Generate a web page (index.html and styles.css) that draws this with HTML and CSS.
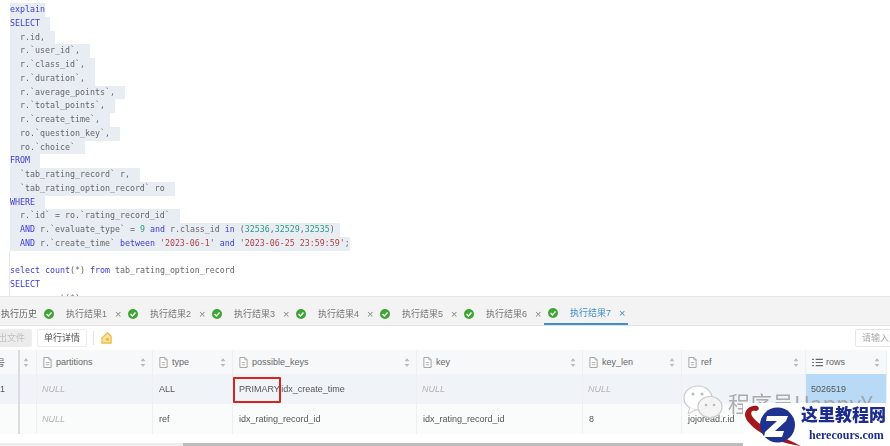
FILE: index.html
```html
<!DOCTYPE html>
<html lang="zh">
<head>
<meta charset="utf-8">
<title>SQL</title>
<link rel="stylesheet" href="styles.css">
</head>
<body>
<svg class="defs" width="0" height="0" aria-hidden="true">
  <symbol id="check" viewBox="0 0 10 10"><circle cx="5" cy="5" r="5" fill="#3fa535"/><path d="M2.600 5.100 4.400 6.900 7.500 3.500" fill="none" stroke="#fff" stroke-width="1.400"/></symbol>
  <symbol id="doc" viewBox="0 0 10 12"><path d="M1 .5h5.500L9 3v8.500H1z" fill="#fff" stroke="#999"/><path d="M6.500.5V3H9M3 6h4M3 8.500h4" fill="none" stroke="#999" stroke-width=".8"/></symbol>
  <symbol id="list" viewBox="0 0 12 10"><path d="M0 1.500h2M4 1.500h8M0 5h2M4 5h8M0 8.500h2M4 8.500h8" stroke="#666" stroke-width="1.300"/></symbol>
  <symbol id="sort" viewBox="0 0 6 12"><path d="M3 1 5.500 4.500H.5zM3 11 .5 7.500h5z" fill="#bbb"/></symbol>
</svg>
<div class="page">
  <section class="code">
    <div class="line sel kw">explain</div>
    <div class="line sel"><span class="kw">SELECT</span>  </div>
    <div class="line sel">  r.id,  </div>
    <div class="line sel">  r.`user_id`,  </div>
    <div class="line sel">  r.`class_id`,  </div>
    <div class="line sel">  r.`duration`,  </div>
    <div class="line sel">  r.`average_points`,  </div>
    <div class="line sel">  r.`total_points`,  </div>
    <div class="line sel">  r.`create_time`,  </div>
    <div class="line sel">  ro.`question_key`,  </div>
    <div class="line sel">  ro.`choice`  </div>
    <div class="line sel"><span class="kw">FROM</span>  </div>
    <div class="line sel">  `tab_rating_record` r,  </div>
    <div class="line sel">  `tab_rating_option_record` ro  </div>
    <div class="line sel"><span class="kw">WHERE</span>  </div>
    <div class="line sel">  r.`id` = ro.`rating_record_id`  </div>
    <div class="line sel">  <span class="kw">AND</span> r.`evaluate_type` = <span class="num">9</span> <span class="kw">and</span> r.class_id <span class="kw">in</span> (<span class="num">32536</span>,<span class="num">32529</span>,<span class="num">32535</span>) </div>
    <div class="line sel">  <span class="kw">AND</span> r.`create_time` <span class="kw">between</span> <span class="str">'2023-06-1'</span> <span class="kw">and</span> <span class="str">'2023-06-25 23:59:59'</span>;</div>
    <div class="line"> </div>
    <div class="line"><span class="kw">select</span> <span class="kw">count</span>(*) <span class="kw">from</span> tab_rating_option_record</div>
    <div class="line"><span class="kw">SELECT</span></div>
    <div class="line">      count(*)</div>
  </section>

  <nav class="tabs">
    <span class="tab-first">执行历史</span>
    <span class="tab"><svg class="check"><use href="#check"/></svg><span class="tab-label">执行结果1</span><span class="close">×</span></span>
    <span class="tab"><svg class="check"><use href="#check"/></svg><span class="tab-label">执行结果2</span><span class="close">×</span></span>
    <span class="tab"><svg class="check"><use href="#check"/></svg><span class="tab-label">执行结果3</span><span class="close">×</span></span>
    <span class="tab"><svg class="check"><use href="#check"/></svg><span class="tab-label">执行结果4</span><span class="close">×</span></span>
    <span class="tab"><svg class="check"><use href="#check"/></svg><span class="tab-label">执行结果5</span><span class="close">×</span></span>
    <span class="tab"><svg class="check"><use href="#check"/></svg><span class="tab-label">执行结果6</span><span class="close">×</span></span>
    <span class="tab active"><svg class="check"><use href="#check"/></svg><span class="tab-label">执行结果7</span><span class="close">×</span></span>
  </nav>

  <div class="toolbar">
    <span class="btn disabled">导出文件</span>
    <span class="btn">单行详情</span>
    <span class="divider"></span>
    <svg class="tool-icon" viewBox="0 0 12 13"><path d="M1 6.500 7 1l4 3.500V12H1z" fill="#f7e3a0" stroke="#ecc04f" stroke-width="1.500"/><circle cx="7" cy="8" r="1.800" fill="#e8b93f"/></svg>
    <span class="search">请输入内容</span>
  </div>

  <div class="grid">
    <div class="cell head stub"><span class="stub-text">序号</span></div>
    <div class="cell head sorter"><svg class="sort"><use href="#sort"/></svg></div>
    <div class="cell head"><svg class="doc"><use href="#doc"/></svg><span class="name">partitions</span><svg class="sort"><use href="#sort"/></svg></div>
    <div class="cell head"><svg class="doc"><use href="#doc"/></svg><span class="name">type</span><svg class="sort"><use href="#sort"/></svg></div>
    <div class="cell head"><svg class="doc"><use href="#doc"/></svg><span class="name">possible_keys</span><svg class="sort"><use href="#sort"/></svg></div>
    <div class="cell head"><svg class="doc"><use href="#doc"/></svg><span class="name">key</span><svg class="sort"><use href="#sort"/></svg></div>
    <div class="cell head"><svg class="doc"><use href="#doc"/></svg><span class="name">key_len</span><svg class="sort"><use href="#sort"/></svg></div>
    <div class="cell head"><svg class="doc"><use href="#doc"/></svg><span class="name">ref</span><svg class="sort"><use href="#sort"/></svg></div>
    <div class="cell head"><svg class="listicon"><use href="#list"/></svg><span class="name">rows</span><svg class="sort"><use href="#sort"/></svg></div>
    <div class="cell head end"></div>

    <div class="cell r1 stub"><span class="stub-text">1</span></div>
    <div class="cell r1 sorter"></div>
    <div class="cell r1 null">NULL</div>
    <div class="cell r1">ALL</div>
    <div class="cell r1 keys">PRIMARY,idx_create_time<span class="mark"></span></div>
    <div class="cell r1 null">NULL</div>
    <div class="cell r1 null">NULL</div>
    <div class="cell r1"></div>
    <div class="cell picked">5026519</div>
    <div class="cell r1 end"></div>

    <div class="cell r2 stub"></div>
    <div class="cell r2 sorter"></div>
    <div class="cell r2 null">NULL</div>
    <div class="cell r2">ref</div>
    <div class="cell r2">idx_rating_record_id</div>
    <div class="cell r2">idx_rating_record_id</div>
    <div class="cell r2">8</div>
    <div class="cell r2">jojoread.r.id</div>
    <div class="cell r2"></div>
    <div class="cell r2 end"></div>
  </div>

  <div class="scroll"><span class="scroll-thumb"></span></div>

  <div class="watermark">
    <svg class="wechat" viewBox="0 0 40 36"><ellipse cx="15" cy="14" rx="14" ry="12" fill="#fff" fill-opacity=".85" stroke="#ccc" stroke-width="1.200"/><path d="M7 23 5 30l7-4" fill="#fff" stroke="#ccc"/><ellipse cx="27" cy="23" rx="12" ry="10.500" fill="#f4f4f4" fill-opacity=".9" stroke="#ccc" stroke-width="1.200"/><circle cx="10" cy="10" r="1.500" fill="#bbb"/><circle cx="19" cy="10" r="1.500" fill="#bbb"/><circle cx="23" cy="21" r="1.300" fill="#bbb"/><circle cx="31" cy="21" r="1.300" fill="#bbb"/></svg>
    <span class="wm-text">程序员HappyY</span>
  </div>
  <div class="brand">
    <svg class="brand-logo" viewBox="0 0 58 43">
      <path d="M14 3C8 2 2 6 2 12 3 22 24 38 58 43 40 34 16 24 9 13 7 9 9 7 13 8 16 8 17 4 14 3z" fill="#a4161a"/>
      <circle cx="34.500" cy="22" r="17.500" fill="#20328f"/>
      <path d="M24 13h21l-2 5-11 10h9l-2 6H21l1-5 12-11h-11z" fill="#fff"/>
    </svg>
    <div class="brand-text">
      <div class="brand-cn">这里教程网</div>
      <div class="brand-en">herecours.com</div>
    </div>
  </div>
</div>
</body>
</html>
```
FILE: styles.css
```css
* { box-sizing: border-box; }
html, body { margin: 0; padding: 0; background: #fff; }
.defs { position: absolute; }
.page {
  position: relative;
  width: 890px;
  height: 446px;
  overflow: hidden;
  font-family: "Liberation Sans", "Noto Sans CJK SC", sans-serif;
  font-size: 9px;
  color: #555;
}
.code {
  height: 296px;
  padding: 3px 0 0 10px;
  overflow: hidden;
  font-family: "DejaVu Sans Mono", monospace;
  font-size: 8.3px;
  color: #666;
  filter: blur(.45px);
}
.line { height: 13.75px; line-height: 13.75px; white-space: pre; width: fit-content; box-shadow: -1px 0 0 #e8e8e8; }
.sel { background: #e8edf3; box-shadow: none; }
.kw { color: #3b3bd6; }
.num { color: #2c9c80; }
.str { color: #b5413f; }

.tabs {
  display: flex;
  align-items: stretch;
  height: 30px;
  background: #f3f3f3;
  border-top: 1px solid #e8e8e8;
  border-bottom: 1px solid #e4e4e4;
  filter: blur(.45px);
}
.tab-first { width: 40px; padding: 5px 0 0 1px; line-height: 24px; color: #666; white-space: nowrap; }
.tab {
  display: flex;
  align-items: center;
  width: 84px;
  padding: 5px 0 0 4px;
  color: #777;
  white-space: nowrap;
}
.check { width: 10px; height: 10px; flex: none; }
.tab-label { margin-left: 12px; width: 41px; }
.close { margin-left: 8px; color: #888; font-size: 11px; }
.tab.active { border-bottom: 2px solid #3f8fd0; color: #3f8fd0; }
.tab.active .close { color: #3f8fd0; }

.toolbar {
  display: flex;
  align-items: center;
  height: 24px;
  background: #fff;
  filter: blur(.45px);
}
.btn {
  display: block;
  height: 18px;
  line-height: 17px;
  padding: 0 6px;
  border: 1px solid #eee;
  border-radius: 2px;
  color: #555;
  white-space: nowrap;
  margin-left: 5px;
}
.btn.disabled { background: #ececec; color: #c0c0c0; margin-left: -18px; }
.divider { width: 1px; height: 14px; background: #e4e4e4; margin-left: 6px; }
.tool-icon { width: 11px; height: 12px; margin-left: 7px; }
.search {
  margin-left: auto;
  width: 70px;
  height: 18px;
  line-height: 16px;
  padding-left: 6px;
  border: 1px solid #e6e6e6;
  border-radius: 2px;
  color: #aaa;
  flex: none;
  margin-right: -35px;
  white-space: nowrap;
}

.grid {
  display: grid;
  grid-template-columns: 20px 17px 116px 80px 184px 166px 99px 124px 81px 3px;
  grid-template-rows: 24px 30px 30px;
  filter: blur(.45px);
}
.cell {
  display: flex;
  align-items: center;
  padding-left: 6px;
  border-right: 1px solid #efefef;
  white-space: nowrap;
  overflow: hidden;
  font-size: 9px;
}
.head { background: #f7f8f9; color: #666; padding-right: 6px; }
.r1 { background: #f0f4f8; }
.r2 { background: #fafbfb; }
.stub {
  padding: 0;
  justify-content: flex-end;
  border-right: 2px solid #dcdcdc;
  padding-right: 13px;
}
.stub-text { flex: none; }
.sorter { padding: 0 0 0 3px; }
.doc { width: 9px; height: 11px; flex: none; margin-right: 4px; }
.listicon { width: 11px; height: 9px; flex: none; margin-right: 3px; }
.name { flex: 1; }
.sort { width: 6px; height: 11px; flex: none; }
.null { color: #b4b4b4; font-style: italic; padding-left: 5px; }
.keys { position: relative; }
.mark {
  position: absolute;
  left: 0;
  top: 3px;
  width: 48px;
  height: 26px;
  border: 2px solid #d2271e;
  border-radius: 1px;
}
.picked { background: #b8daf6; padding-left: 5px; }
.end { border-right: 0; background: #fff; padding: 0; }

.scroll { height: 12px; padding: 9px 0 0 0; filter: blur(.45px); }
.scroll-thumb {
  display: block;
  height: 3px;
  background: linear-gradient(to right, #eee 183px, #bdbdbd 183px);
}

.watermark {
  position: absolute;
  left: 683px;
  top: 384px;
  display: flex;
  align-items: center;
  filter: blur(.4px);
}
.wechat { width: 40px; height: 36px; flex: none; }
.wm-text {
  margin-left: 5px;
  font-family: "Noto Sans CJK SC", sans-serif;
  font-size: 22px;
  color: #9a9a9a;
  opacity: .8;
  white-space: nowrap;
}
.brand {
  position: absolute;
  left: 743px;
  top: 403px;
  width: 147px;
  height: 43px;
  background: #fff;
  display: flex;
}
.brand-logo { width: 58px; height: 43px; flex: none; }
.brand-text { color: #1c2c8e; }
.brand-cn {
  font-family: "Noto Sans CJK SC", sans-serif;
  font-weight: 900;
  font-size: 17px;
  line-height: 22px;
  white-space: nowrap;
}
.brand-en {
  font-family: "Liberation Serif", serif;
  font-weight: 700;
  font-size: 12px;
  line-height: 16px;
  margin: 2px 0 0 8px;
  white-space: nowrap;
}
```
